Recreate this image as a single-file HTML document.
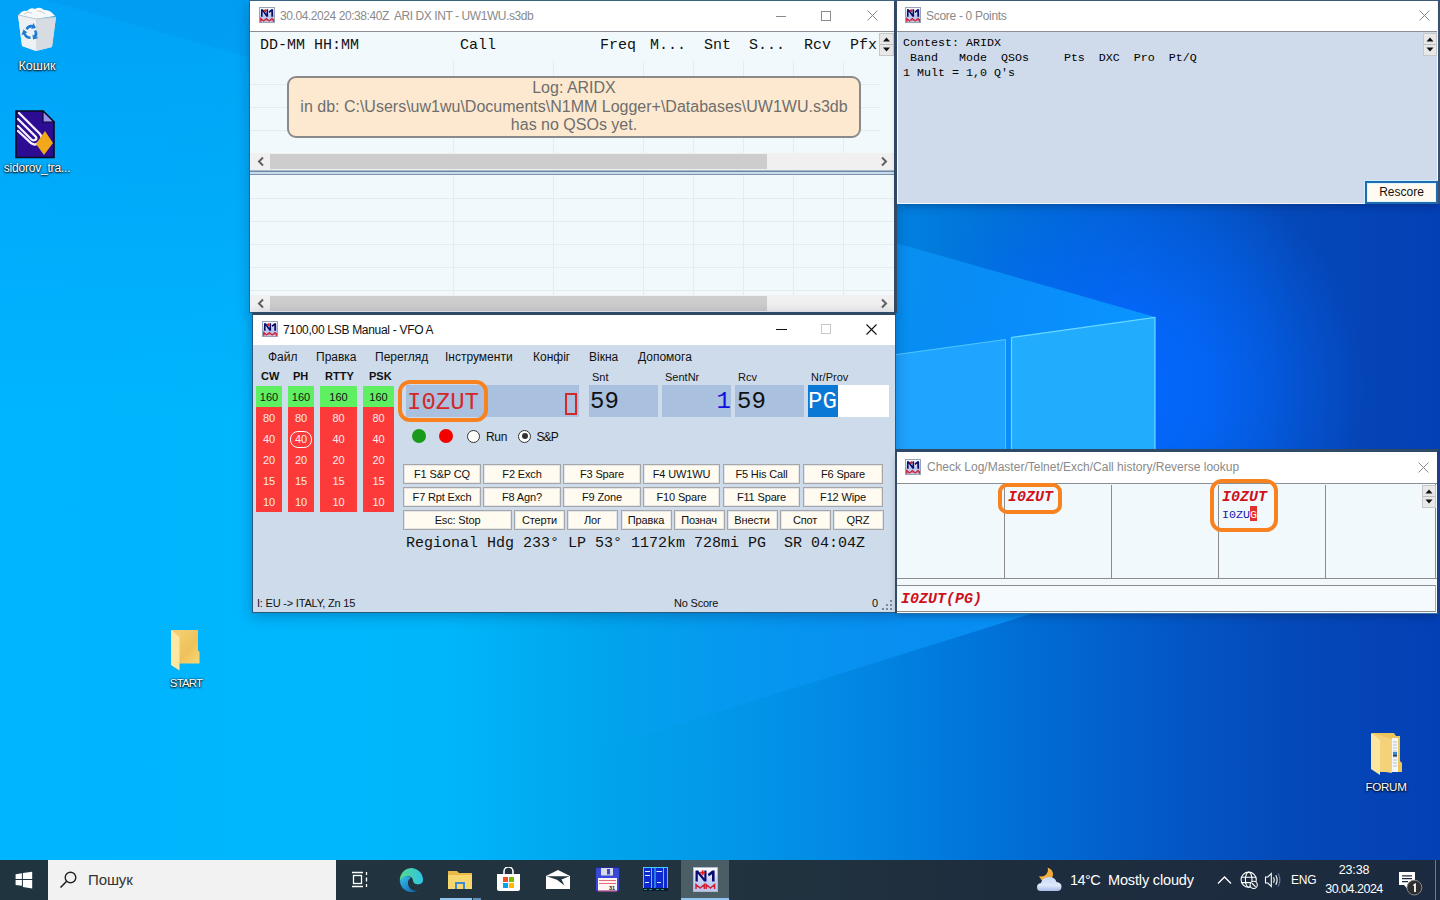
<!DOCTYPE html>
<html><head><meta charset="utf-8">
<style>
*{box-sizing:border-box;margin:0;padding:0}
html,body{width:1440px;height:900px;overflow:hidden;position:relative;font-family:"Liberation Sans",sans-serif}
.a{position:absolute}
.mono{font-family:"Liberation Mono",monospace}
.win{position:absolute;background:#fff;overflow:hidden;box-shadow:0 3px 12px rgba(0,20,60,0.28)}
.tt{position:absolute;font-size:12px;white-space:nowrap}
.lbl{position:absolute;white-space:nowrap}
.btn{position:absolute;height:20px;background:#fffbf0;border:1px solid #a6a6a6;box-shadow:inset 0 0 0 1px #e6e6e6;font-size:11px;color:#111;text-align:center;line-height:18px;white-space:nowrap;letter-spacing:-0.15px}
.dlbl{position:absolute;text-align:center;font-size:12px;color:#fff;text-shadow:0 0 2px #000,0 1px 2px #000;white-space:nowrap;letter-spacing:-0.2px}
</style></head><body>
<!-- WALLPAPER -->
<svg class="a" style="left:0;top:0" width="1440" height="900" viewBox="0 0 1440 900">
<defs>
<linearGradient id="bg" x1="0" y1="0" x2="1440" y2="0" gradientUnits="userSpaceOnUse">
<stop offset="0" stop-color="#00b5ff"/>
<stop offset="0.31" stop-color="#00b6fb"/>
<stop offset="0.42" stop-color="#00a4ec"/>
<stop offset="0.49" stop-color="#029aea"/>
<stop offset="0.59" stop-color="#0288e4"/>
<stop offset="0.69" stop-color="#0072d8"/>
<stop offset="0.80" stop-color="#035ac8"/>
<stop offset="0.90" stop-color="#0548b8"/>
<stop offset="1" stop-color="#0440b5"/>
</linearGradient>
</defs>
<rect width="1440" height="900" fill="url(#bg)"/>
<defs><linearGradient id="topdark" x1="0" y1="0" x2="0" y2="420" gradientUnits="userSpaceOnUse"><stop offset="0" stop-color="#0068e0" stop-opacity="0.24"/><stop offset="1" stop-color="#0068e0" stop-opacity="0"/></linearGradient></defs>
<rect x="0" y="0" width="897" height="420" fill="url(#topdark)"/>
<polygon points="0,0 0,-13 252,58 252,0" fill="#0070d0" opacity="0.1"/>
<defs><linearGradient id="beam" x1="560" y1="0" x2="1155" y2="0" gradientUnits="userSpaceOnUse">
<stop offset="0" stop-color="#10a0ff" stop-opacity="0"/>
<stop offset="1" stop-color="#0a98ff" stop-opacity="0.95"/></linearGradient>
<radialGradient id="glow" cx="1130" cy="390" r="235" gradientUnits="userSpaceOnUse">
<stop offset="0" stop-color="#0468ff" stop-opacity="1"/>
<stop offset="0.35" stop-color="#0468ff" stop-opacity="0.8"/>
<stop offset="1" stop-color="#0468ff" stop-opacity="0"/></radialGradient>
</defs>
<rect x="700" y="0" width="740" height="860" fill="url(#glow)"/>
<polygon points="0,-13 1155,317 1155,575 0,937" fill="url(#beam)"/>
<polygon points="600,395 1006,339 1006,560 600,560" fill="#1fa4ff"/>
<polygon points="1011,337 1155,317 1155,560 1011,560" fill="#21acfe"/>
<polyline points="600,395.5 1005.5,339.5 1005.5,560" fill="none" stroke="#50c4ff" stroke-width="1"/>
<polyline points="1011.5,560 1011.5,337.5 1155,317.5 1155,560" fill="none" stroke="#6ad8ff" stroke-width="1.2"/>
</svg>
<!-- N1MM icon symbol -->
<svg width="0" height="0" style="position:absolute">
<defs>
<linearGradient id="icg" x1="0" y1="0" x2="0" y2="1"><stop offset="0" stop-color="#ffffff"/><stop offset="0.55" stop-color="#b8c8f0"/><stop offset="1" stop-color="#c8d0f0"/></linearGradient>
<symbol id="n1" viewBox="0 0 16 16">
<rect x="0.5" y="0.5" width="15" height="15" fill="url(#icg)" stroke="#9aa2b8" stroke-width="1"/>
<path d="M2 9.8V2.2h1.9l3.6 4.9V2.2h1.6v7.6H7.4L3.6 4.6v5.2z" fill="#0c0c66"/>
<path d="M9.6 4.6l2.8-2.4h1.7v7.6h-1.8V4.6l-1.9 1.3z" fill="#0c0c66"/>
<path d="M5 3.6h2.6M6.3 2.3v2.6" stroke="#e41c1c" stroke-width="1.2"/>
<path d="M1.8 14.8V11.6L4.6 14 7.4 11.6 10.2 14 13 11.6 14.4 12.8V14.8" fill="none" stroke="#cc1828" stroke-width="1.3"/>
<path d="M2 13.6H14" stroke="#d04050" stroke-width="0.6"/>
</symbol>
</defs></svg>

<!-- WINDOW 1: LOG -->
<div class="win" style="left:249px;top:0;width:648px;height:313px;background:#f2f9fd;border:1px solid #3b6482;border-right:3px solid #354a63">
  <div class="a" style="left:0;top:0;width:646px;height:31px;background:#fff;border-bottom:1px solid #8a8f96"></div>
  <svg class="a" style="left:9px;top:6px" width="16" height="16"><use href="#n1"/></svg>
  <div class="tt" style="left:30px;top:8px;color:#8a8a8a;letter-spacing:-0.43px">30.04.2024 20:38:40Z&nbsp; ARI DX INT - UW1WU.s3db</div>
  <!-- caption buttons -->
  <div class="a" style="left:526px;top:15px;width:10px;height:1px;background:#8a8a8a"></div>
  <div class="a" style="left:571px;top:10px;width:10px;height:10px;border:1px solid #8a8a8a"></div>
  <svg class="a" style="left:617px;top:9px" width="11" height="11"><path d="M0.5 0.5L10.5 10.5M10.5 0.5L0.5 10.5" stroke="#8a8a8a" stroke-width="1"/></svg>
  <!-- grid upper -->
  <svg class="a" style="left:0;top:31px" width="646" height="122">
    <g stroke="#e4ecf0" stroke-width="1">
      <path d="M0 52.5H630M0 75.5H630M0 98.5H630M0 121.5H630"/>
      <path d="M203.5 29V122M303.5 29V122M393.5 29V122M443.5 29V122M493.5 29V122M543.5 29V122M593.5 29V122"/>
    </g>
  </svg>
  <div class="a mono" style="left:10px;top:36px;font-size:15px;color:#111;white-space:pre">DD-MM HH:MM</div>
  <div class="a mono" style="left:210px;top:36px;font-size:15px;color:#111">Call</div>
  <div class="a mono" style="left:350px;top:36px;font-size:15px;color:#111">Freq</div>
  <div class="a mono" style="left:400px;top:36px;font-size:15px;color:#111">M...</div>
  <div class="a mono" style="left:454px;top:36px;font-size:15px;color:#111">Snt</div>
  <div class="a mono" style="left:499px;top:36px;font-size:15px;color:#111">S...</div>
  <div class="a mono" style="left:554px;top:36px;font-size:15px;color:#111">Rcv</div>
  <div class="a mono" style="left:600px;top:36px;font-size:15px;color:#111">Pfx</div>
  <!-- spinner -->
  <div class="a" style="left:629px;top:32px;width:15px;height:23px;background:#e8e8e8;border:1px solid #c8c8c8"></div>
  <svg class="a" style="left:630px;top:33px" width="13" height="21"><path d="M3 7.5h7L6.5 3.5z" fill="#111"/><path d="M3 13.5h7L6.5 17.5z" fill="#111"/><path d="M0 10.5H13" stroke="#bdbdbd"/></svg>
  <!-- balloon -->
  <div class="a" style="left:37px;top:75px;width:574px;height:62px;background:#fde9cf;border:2px solid #8a8a8a;border-radius:9px"></div>
  <div class="a" style="left:37px;top:78px;width:574px;text-align:center;font-size:16px;line-height:18.5px;color:#6e6e6e">Log: ARIDX<br>in db: C:\Users\uw1wu\Documents\N1MM Logger+\Databases\UW1WU.s3db<br>has no QSOs yet.</div>
  <!-- scrollbar 1 -->
  <div class="a" style="left:0;top:152px;width:646px;height:17px;background:#f0f0f0"></div>
  <div class="a" style="left:20px;top:153px;width:497px;height:15px;background:#cdcdcd"></div>
  <svg class="a" style="left:6px;top:155px" width="10" height="11"><path d="M7 1.5L3 5.5L7 9.5" fill="none" stroke="#606060" stroke-width="2"/></svg>
  <svg class="a" style="left:629px;top:155px" width="10" height="11"><path d="M3 1.5L7 5.5L3 9.5" fill="none" stroke="#606060" stroke-width="2"/></svg>
  <!-- splitter -->
  <div class="a" style="left:0;top:169px;width:646px;height:1px;background:#a8b8c8"></div>
  <div class="a" style="left:0;top:170px;width:646px;height:1px;background:#6f8aa5"></div>
  <div class="a" style="left:0;top:171px;width:646px;height:2px;background:#c8dcec"></div>
  <div class="a" style="left:0;top:173px;width:646px;height:1px;background:#7d93aa"></div>
  <!-- grid lower -->
  <svg class="a" style="left:0;top:174px" width="646" height="121">
    <g stroke="#e4ecf0" stroke-width="1">
      <path d="M0 23.5H646M0 46.5H646M0 69.5H646M0 92.5H646M0 115.5H646"/>
      <path d="M203.5 0V121M303.5 0V121M393.5 0V121M443.5 0V121M493.5 0V121M543.5 0V121M593.5 0V121"/>
    </g>
  </svg>
  <!-- scrollbar 2 -->
  <div class="a" style="left:0;top:294px;width:646px;height:17px;background:#f0f0f0"></div>
  <div class="a" style="left:20px;top:295px;width:497px;height:15px;background:#cdcdcd"></div>
  <svg class="a" style="left:6px;top:297px" width="10" height="11"><path d="M7 1.5L3 5.5L7 9.5" fill="none" stroke="#606060" stroke-width="2"/></svg>
  <svg class="a" style="left:629px;top:297px" width="10" height="11"><path d="M3 1.5L7 5.5L3 9.5" fill="none" stroke="#606060" stroke-width="2"/></svg>
</div>

<!-- WINDOW 2: SCORE -->
<div class="win" style="left:896px;top:0;width:544px;height:204px;background:#cfdcec;border-left:1px solid #354a63;border-top:1px solid #3b5a7a;border-right:2px solid #3a5070;box-shadow:0 5px 8px -3px rgba(0,20,60,0.35)">
  <div class="a" style="left:0;top:0;width:543px;height:31px;background:#fff;border-bottom:1px solid #8a8f96"></div>
  <svg class="a" style="left:8px;top:6px" width="16" height="16"><use href="#n1"/></svg>
  <div class="tt" style="left:29px;top:8px;color:#8a8a8a;letter-spacing:-0.3px">Score - 0 Points</div>
  <svg class="a" style="left:522px;top:9px" width="11" height="11"><path d="M0.5 0.5L10.5 10.5M10.5 0.5L0.5 10.5" stroke="#8a8a8a" stroke-width="1"/></svg>
  <div class="a" style="left:0;top:31px;width:541px;height:171px;background:#cfdbeb"></div>
  <div class="a" style="left:0;top:31px;width:1px;height:171px;background:#f4f8fc"></div>
  <div class="a mono" style="left:6px;top:35px;font-size:11.67px;line-height:15px;color:#000;white-space:pre">Contest: ARIDX
 Band   Mode  QSOs     Pts  DXC  Pro  Pt/Q
1 Mult = 1,0 Q's</div>
  <div class="a" style="left:526px;top:32px;width:14px;height:23px;background:#e8e8e8;border:1px solid #c8c8c8"></div>
  <svg class="a" style="left:527px;top:33px" width="12" height="21"><path d="M2.5 7.5h7L6 3.5z" fill="#111"/><path d="M2.5 13.5h7L6 17.5z" fill="#111"/><path d="M0 10.5H12" stroke="#bdbdbd"/></svg>
  <div class="a" style="left:0;top:202px;width:544px;height:2px;background:#f4f6f8"></div>
  <!-- rescore -->
  <div class="a" style="left:540px;top:0;width:1px;height:204px;background:#f4f8fc"></div>
  <div class="a" style="left:468px;top:180px;width:73px;height:23px;border:2px solid #1f6bb2;background:#fffbf0;box-shadow:0 0 0 1px #c8ecff,inset 0 0 0 1px #dff6ff"></div>
  <div class="a" style="left:468px;top:184px;width:73px;text-align:center;font-size:12px;color:#111">Rescore</div>
</div>

<!-- WINDOW 3: ENTRY -->
<div class="win" style="left:252px;top:312px;width:644px;height:301px;background:#cedbeb;border:1px solid #2a5a80;border-top:3px solid #2f4a66">
  <div class="a" style="left:0;top:0;width:644px;height:30px;background:#fff"></div>
  <svg class="a" style="left:9px;top:6px" width="16" height="16"><use href="#n1"/></svg>
  <div class="tt" style="left:30px;top:8px;color:#111;letter-spacing:-0.3px">7100,00 LSB Manual - VFO A</div>
  <div class="a" style="left:523px;top:14px;width:11px;height:1px;background:#111"></div>
  <div class="a" style="left:568px;top:9px;width:10px;height:10px;border:1px solid #c8c8c8"></div>
  <svg class="a" style="left:613px;top:9px" width="11" height="11"><path d="M0.5 0.5L10.5 10.5M10.5 0.5L0.5 10.5" stroke="#111" stroke-width="1.1"/></svg>
  <!-- menu -->
  <div class="a" style="left:15px;top:35px;font-size:12px;color:#111;white-space:nowrap;word-spacing:0">
    <span class="a" style="left:0">Файл</span><span class="a" style="left:48px">Правка</span><span class="a" style="left:107px">Перегляд</span><span class="a" style="left:177px">Інструменти</span><span class="a" style="left:265px">Конфіг</span><span class="a" style="left:321px">Вікна</span><span class="a" style="left:370px">Допомога</span>
  </div>
  <!-- band labels -->
  <div class="a" style="left:0;top:54.5px;font-size:11px;font-weight:bold;color:#111;white-space:nowrap">
    <span class="a" style="left:8px">CW</span><span class="a" style="left:40px">PH</span><span class="a" style="left:72px">RTTY</span><span class="a" style="left:116px">PSK</span>
  </div>
  <!-- band columns -->
  <div class="a" style="left:3px;top:71px;width:26px;height:21px;background:#5ff062"></div>
<div class="a" style="left:3px;top:76px;width:26px;text-align:center;font-size:11px;color:#111">160</div>
<div class="a" style="left:3px;top:92px;width:26px;height:21px;background:#fd3a3a"></div>
<div class="a" style="left:3px;top:97px;width:26px;text-align:center;font-size:11px;color:#ffecec">80</div>
<div class="a" style="left:3px;top:113px;width:26px;height:21px;background:#fd3a3a"></div>
<div class="a" style="left:3px;top:118px;width:26px;text-align:center;font-size:11px;color:#ffecec">40</div>
<div class="a" style="left:3px;top:134px;width:26px;height:21px;background:#fd3a3a"></div>
<div class="a" style="left:3px;top:139px;width:26px;text-align:center;font-size:11px;color:#ffecec">20</div>
<div class="a" style="left:3px;top:155px;width:26px;height:21px;background:#fd3a3a"></div>
<div class="a" style="left:3px;top:160px;width:26px;text-align:center;font-size:11px;color:#ffecec">15</div>
<div class="a" style="left:3px;top:176px;width:26px;height:21px;background:#fd3a3a"></div>
<div class="a" style="left:3px;top:181px;width:26px;text-align:center;font-size:11px;color:#ffecec">10</div>
<div class="a" style="left:35px;top:71px;width:26px;height:21px;background:#5ff062"></div>
<div class="a" style="left:35px;top:76px;width:26px;text-align:center;font-size:11px;color:#111">160</div>
<div class="a" style="left:35px;top:92px;width:26px;height:21px;background:#fd3a3a"></div>
<div class="a" style="left:35px;top:97px;width:26px;text-align:center;font-size:11px;color:#ffecec">80</div>
<div class="a" style="left:35px;top:113px;width:26px;height:21px;background:#fd3a3a"></div>
<div class="a" style="left:35px;top:118px;width:26px;text-align:center;font-size:11px;color:#ffecec">40</div>
<div class="a" style="left:35px;top:134px;width:26px;height:21px;background:#fd3a3a"></div>
<div class="a" style="left:35px;top:139px;width:26px;text-align:center;font-size:11px;color:#ffecec">20</div>
<div class="a" style="left:35px;top:155px;width:26px;height:21px;background:#fd3a3a"></div>
<div class="a" style="left:35px;top:160px;width:26px;text-align:center;font-size:11px;color:#ffecec">15</div>
<div class="a" style="left:35px;top:176px;width:26px;height:21px;background:#fd3a3a"></div>
<div class="a" style="left:35px;top:181px;width:26px;text-align:center;font-size:11px;color:#ffecec">10</div>
<div class="a" style="left:67px;top:71px;width:37px;height:21px;background:#5ff062"></div>
<div class="a" style="left:67px;top:76px;width:37px;text-align:center;font-size:11px;color:#111">160</div>
<div class="a" style="left:67px;top:92px;width:37px;height:21px;background:#fd3a3a"></div>
<div class="a" style="left:67px;top:97px;width:37px;text-align:center;font-size:11px;color:#ffecec">80</div>
<div class="a" style="left:67px;top:113px;width:37px;height:21px;background:#fd3a3a"></div>
<div class="a" style="left:67px;top:118px;width:37px;text-align:center;font-size:11px;color:#ffecec">40</div>
<div class="a" style="left:67px;top:134px;width:37px;height:21px;background:#fd3a3a"></div>
<div class="a" style="left:67px;top:139px;width:37px;text-align:center;font-size:11px;color:#ffecec">20</div>
<div class="a" style="left:67px;top:155px;width:37px;height:21px;background:#fd3a3a"></div>
<div class="a" style="left:67px;top:160px;width:37px;text-align:center;font-size:11px;color:#ffecec">15</div>
<div class="a" style="left:67px;top:176px;width:37px;height:21px;background:#fd3a3a"></div>
<div class="a" style="left:67px;top:181px;width:37px;text-align:center;font-size:11px;color:#ffecec">10</div>
<div class="a" style="left:110px;top:71px;width:31px;height:21px;background:#5ff062"></div>
<div class="a" style="left:110px;top:76px;width:31px;text-align:center;font-size:11px;color:#111">160</div>
<div class="a" style="left:110px;top:92px;width:31px;height:21px;background:#fd3a3a"></div>
<div class="a" style="left:110px;top:97px;width:31px;text-align:center;font-size:11px;color:#ffecec">80</div>
<div class="a" style="left:110px;top:113px;width:31px;height:21px;background:#fd3a3a"></div>
<div class="a" style="left:110px;top:118px;width:31px;text-align:center;font-size:11px;color:#ffecec">40</div>
<div class="a" style="left:110px;top:134px;width:31px;height:21px;background:#fd3a3a"></div>
<div class="a" style="left:110px;top:139px;width:31px;text-align:center;font-size:11px;color:#ffecec">20</div>
<div class="a" style="left:110px;top:155px;width:31px;height:21px;background:#fd3a3a"></div>
<div class="a" style="left:110px;top:160px;width:31px;text-align:center;font-size:11px;color:#ffecec">15</div>
<div class="a" style="left:110px;top:176px;width:31px;height:21px;background:#fd3a3a"></div>
<div class="a" style="left:110px;top:181px;width:31px;text-align:center;font-size:11px;color:#ffecec">10</div>
<div class="a" style="left:36.5px;top:115.8px;width:22.5px;height:17px;border:1px solid #fff;border-radius:8px"></div>
  <!-- call field -->
  <div class="a" style="left:153px;top:70px;width:173px;height:32px;background:#a9c0df"></div>
  <div class="a mono" style="left:154px;top:74px;font-size:24px;color:#d42828">I0ZUT</div>
  <div class="a" style="left:312px;top:78px;width:12px;height:22px;border:2px solid #d42828"></div>
  <div class="a" style="left:145px;top:65px;width:90px;height:42px;border:4.5px solid #f7821f;border-radius:12px"></div>
  <!-- indicators -->
  <div class="a" style="left:159px;top:114px;width:14px;height:14px;border-radius:50%;background:#1a9a1a"></div>
  <div class="a" style="left:186px;top:114px;width:14px;height:14px;border-radius:50%;background:#f40000"></div>
  <div class="a" style="left:213.5px;top:114.5px;width:13px;height:13px;border-radius:50%;background:#fff;border:1px solid #333"></div>
  <div class="a" style="left:233px;top:115px;font-size:12px;color:#111;letter-spacing:-0.3px">Run</div>
  <div class="a" style="left:265px;top:114.5px;width:13px;height:13px;border-radius:50%;background:#fff;border:1px solid #333"></div>
  <div class="a" style="left:268.5px;top:118px;width:6px;height:6px;border-radius:50%;background:#333"></div>
  <div class="a" style="left:283.5px;top:115px;font-size:12px;color:#111;letter-spacing:-0.9px">S&amp;P</div>
  <!-- exchange labels -->
  <div class="a" style="left:339px;top:56px;font-size:11px;color:#111">Snt</div>
  <div class="a" style="left:412px;top:56px;font-size:11px;color:#111">SentNr</div>
  <div class="a" style="left:485px;top:56px;font-size:11px;color:#111">Rcv</div>
  <div class="a" style="left:558px;top:56px;font-size:11px;color:#111">Nr/Prov</div>
  <div class="a" style="left:336px;top:70px;width:69px;height:32px;background:#a9c0df"></div>
  <div class="a" style="left:409px;top:70px;width:69px;height:32px;background:#a9c0df"></div>
  <div class="a" style="left:482px;top:70px;width:69px;height:32px;background:#a9c0df"></div>
  <div class="a" style="left:555px;top:70px;width:81px;height:32px;background:#fff"></div>
  <div class="a" style="left:555px;top:70px;width:30px;height:32px;background:#0a78d4"></div>
  <div class="a mono" style="left:337px;top:73px;font-size:24px;color:#111">59</div>
  <div class="a mono" style="left:409px;top:73px;width:69px;text-align:right;font-size:24px;color:#1010e0">1</div>
  <div class="a mono" style="left:484px;top:73px;font-size:24px;color:#111">59</div>
  <div class="a mono" style="left:555px;top:73px;font-size:24px;color:#fff">PG</div>
  <!-- buttons -->
  <div class="btn" style="left:150px;top:149px;width:78px">F1 S&amp;P CQ</div>
  <div class="btn" style="left:230px;top:149px;width:78px">F2 Exch</div>
  <div class="btn" style="left:310px;top:149px;width:78px">F3 Spare</div>
  <div class="btn" style="left:390px;top:149px;width:77px">F4 UW1WU</div>
  <div class="btn" style="left:470px;top:149px;width:77px">F5 His Call</div>
  <div class="btn" style="left:550px;top:149px;width:80px">F6 Spare</div>
  <div class="btn" style="left:150px;top:172px;width:78px">F7 Rpt Exch</div>
  <div class="btn" style="left:230px;top:172px;width:78px">F8 Agn?</div>
  <div class="btn" style="left:310px;top:172px;width:78px">F9 Zone</div>
  <div class="btn" style="left:390px;top:172px;width:77px">F10 Spare</div>
  <div class="btn" style="left:470px;top:172px;width:77px">F11 Spare</div>
  <div class="btn" style="left:550px;top:172px;width:80px">F12 Wipe</div>
  <div class="btn" style="left:150px;top:195px;width:109px">Esc: Stop</div>
  <div class="btn" style="left:261px;top:195px;width:51px">Стерти</div>
  <div class="btn" style="left:314px;top:195px;width:51px">Лог</div>
  <div class="btn" style="left:367.5px;top:195px;width:51px">Правка</div>
  <div class="btn" style="left:420.5px;top:195px;width:51px">Познач</div>
  <div class="btn" style="left:473.5px;top:195px;width:51px">Внести</div>
  <div class="btn" style="left:526.5px;top:195px;width:51px">Спот</div>
  <div class="btn" style="left:579.5px;top:195px;width:51px">QRZ</div>
  <div class="a mono" style="left:153px;top:220px;font-size:15px;color:#111;white-space:pre">Regional Hdg 233° LP 53° 1172km 728mi PG  SR 04:04Z</div>
  <!-- status -->
  <div class="a" style="left:4px;top:282px;font-size:11px;color:#111;letter-spacing:-0.2px">I: EU -&gt; ITALY, Zn 15</div>
  <div class="a" style="left:421px;top:282px;font-size:11px;color:#111;letter-spacing:-0.2px">No Score</div>
  <div class="a" style="left:619px;top:282px;font-size:11px;color:#111">0</div>
  <svg class="a" style="left:628px;top:284px" width="14" height="14"><g fill="#7d8a9c"><rect x="9" y="1" width="2" height="2"/><rect x="5" y="5" width="2" height="2"/><rect x="9" y="5" width="2" height="2"/><rect x="1" y="9" width="2" height="2"/><rect x="5" y="9" width="2" height="2"/><rect x="9" y="9" width="2" height="2"/></g></svg>

</div>

<!-- WINDOW 4: CHECK -->
<div class="win" style="box-shadow:0 5px 8px -3px rgba(0,20,60,0.35);left:895px;top:449px;width:545px;height:165px;background:#f2f9fd;border-left:2px solid #354a63;border-top:3px solid #2f4a66;border-bottom:1px solid #3070a8;border-right:3px solid #1c3c88">
  <div class="a" style="left:0;top:0;width:543px;height:32px;background:#fff;border-bottom:1px solid #8a8f96"></div>
  <svg class="a" style="left:8px;top:7px" width="16" height="16"><use href="#n1"/></svg>
  <div class="tt" style="left:30px;top:8px;color:#8a8a8a;letter-spacing:0px">Check Log/Master/Telnet/Exch/Call history/Reverse lookup</div>
  <svg class="a" style="left:521px;top:10px" width="11" height="11"><path d="M0.5 0.5L10.5 10.5M10.5 0.5L0.5 10.5" stroke="#8a8a8a" stroke-width="1"/></svg>
  <!-- grid -->
  <div class="a" style="left:0;top:32px;width:543px;height:95px;background:#f2f9fd"></div>
  <svg class="a" style="left:0;top:31px" width="543" height="100">
    <g stroke="#8c8c8c" stroke-width="1">
      <path d="M107.5 2V95M214.5 2V95M321.5 2V95M428.5 2V95M538.5 1V95"/>
      <path d="M0 95.5H543"/>
    </g>
  </svg>
  <div class="a" style="left:525px;top:33px;width:14px;height:23px;background:#e8e8e8;border:1px solid #c8c8c8"></div>
  <svg class="a" style="left:526px;top:34px" width="12" height="21"><path d="M2.5 7.5h7L6 3.5z" fill="#111"/><path d="M2.5 13.5h7L6 17.5z" fill="#111"/><path d="M0 10.5H12" stroke="#bdbdbd"/></svg>
  <div class="a mono" style="left:111px;top:37px;font-size:15px;font-weight:bold;font-style:italic;color:#d0101a">I0ZUT</div>
  <div class="a mono" style="left:325px;top:37px;font-size:15px;font-weight:bold;font-style:italic;color:#d0101a">I0ZUT</div>
  <div class="a" style="left:353px;top:54px;width:7px;height:15px;background:#e03030"></div>
  <div class="a mono" style="left:325px;top:56px;font-size:11.67px;color:#1818b0">I0ZU<span style="color:#fff">G</span></div>
  <div class="a" style="left:101px;top:31px;width:64px;height:31px;border:4px solid #f7821f;border-radius:9px"></div>
  <div class="a" style="left:313px;top:27px;width:68px;height:53px;border:4px solid #f7821f;border-radius:12px"></div>
  <!-- input -->
  <div class="a" style="left:0;top:133px;width:539px;height:27px;background:#f4fafd;border-top:1px solid #8c8c8c;border-bottom:1px solid #8c8c8c;border-right:1px solid #a8a8a8"></div>
  <div class="a mono" style="left:4px;top:139px;font-size:15px;font-weight:bold;font-style:italic;color:#d0101a">I0ZUT(PG)</div>
</div>

<!-- DESKTOP ICONS -->
<svg class="a" style="left:10px;top:4px" width="54" height="52" viewBox="0 0 54 52">
  <path d="M8 11 L26 15 L46 13 L42 43 L26 47 L12 42 Z" fill="#dfe4e8"/>
  <path d="M8 11 L26 15 L26 47 L12 42 Z" fill="#eef1f3"/>
  <path d="M26 15 L46 13 L42 43 L26 47 Z" fill="#d6dce1"/>
  <path d="M9 11 Q12 6 17 7 Q20 3 25 5 Q30 2 34 6 Q40 5 45 12 L26 15 Z" fill="#f6f8f9"/>
  <path d="M14 10 Q18 7 22 9 M27 7 Q31 6 35 10" fill="none" stroke="#c8d0d6" stroke-width="1"/>
  <path d="M8 11 L26 15 L46 13" fill="none" stroke="#b8c4cc" stroke-width="0.8"/>
  <g fill="#1f7bd2">
    <path d="M15.5 24.5 Q18 20 22.5 21 L23.5 19 L26 24 L21 25 L22 23.5 Q19 23 17.5 26 Z"/>
    <path d="M26 26 Q28.5 29.5 26.5 33 L28.5 34 L23 35.5 L22.5 30.5 L24 31.5 Q25.5 29 24 27 Z"/>
    <path d="M20.5 35 Q15.5 35 13.5 30.5 L11.5 31 L13.5 25.5 L17.5 28.5 L15.5 29 Q17 32.5 20.5 32.5 Z"/>
  </g>
</svg>
<div class="dlbl" style="left:0px;top:59px;width:74px;font-size:12.6px;letter-spacing:0">Кошик</div>
<svg class="a" style="left:15px;top:110px" width="41" height="49" viewBox="0 0 41 49">
  <path d="M1 1 H28 L39 12 V47.5 H1 Z" fill="#2c0c92" stroke="#0a0a20" stroke-width="1.6"/>
  <path d="M28 1 V12 H39 Z" fill="#9a94f0" stroke="#0a0a20" stroke-width="1.2"/>
  <g fill="none" stroke="#f4eeff" stroke-width="2.3" stroke-linecap="round">
    <path d="M4 3 L25 24 Q28 28 25 31 L23 33 Q20 36 16 33 L3 21"/>
    <path d="M3 9 L21 27 Q22 29 20 30 Q18 31 16 29 L3 16"/>
  </g>
  <path d="M30 21 L38 33 L29 45 L21 34 Z" fill="#f2a818"/>
</svg>
<div class="dlbl" style="left:0px;top:161px;width:74px">sidorov_tra...</div>
<svg class="a" style="left:169px;top:628px" width="33" height="44" viewBox="0 0 33 44">
  <defs><linearGradient id="fldB" x1="0" y1="0" x2="1" y2="1"><stop offset="0" stop-color="#f6d27a"/><stop offset="0.6" stop-color="#eec25a"/><stop offset="1" stop-color="#f8d878"/></linearGradient></defs>
  <path d="M2.5 2 H29 V22 L30.5 24 V35.5 H10 Z" fill="url(#fldB)"/>
  <path d="M2 2 L10.5 9 V42.5 L2 37 Z" fill="#fde7a2"/>
</svg>
<div class="dlbl" style="left:146px;top:677px;width:80px;font-size:11.4px;letter-spacing:-0.8px">START</div>
<svg class="a" style="left:1369px;top:730px" width="36" height="46" viewBox="0 0 36 46">
  <path d="M3 3 H25 L27 6 H31 V31 L33 33 V42 H10 Z" fill="#eec45c"/>
  <path d="M23 8 H29 V42 H23 Z" fill="#f4f6f8"/>
  <g stroke="#9ab0c0" stroke-width="0.7"><path d="M24 12H28M24 15H28M24 18H28M24 21H28M24 27H28M24 30H28M24 33H28M24 36H28"/></g>
  <rect x="24" y="22" width="4" height="3" fill="#3a8ad0"/><rect x="24" y="25" width="4" height="1.5" fill="#223a50"/>
  <path d="M3 3 L23 9 V43 L10 41 Z" fill="#f4d27a"/>
  <path d="M2 3 L11 10 V45 L2 39 Z" fill="#fde6a0"/>
</svg>
<div class="dlbl" style="left:1346px;top:780px;width:80px;font-size:11.6px;letter-spacing:-0.3px">FORUM</div>

<!-- TASKBAR -->
<div class="a" style="left:0;top:860px;width:1440px;height:40px;background:linear-gradient(90deg,#20343f 0%,#21333f 50%,#1e2d3e 70%,#1c2a3f 100%)"></div>
<svg class="a" style="left:15px;top:871px" width="18" height="18" viewBox="0 0 18 18"><g fill="#fff"><path d="M0.6 3.2 L6.9 2.3 V8 H0.6Z"/><path d="M7.9 2.1 L17.2 0.7 V8 H7.9Z"/><path d="M0.6 9 H6.9 V14.8 L0.6 14Z"/><path d="M7.9 9 H17.2 V17.4 L7.9 16Z"/></g></svg>
<div class="a" style="left:48px;top:860px;width:288px;height:40px;background:#f2f2f2"></div>
<svg class="a" style="left:59px;top:871px" width="19" height="18" viewBox="0 0 19 18"><circle cx="11.5" cy="6.5" r="5.3" fill="none" stroke="#222" stroke-width="1.4"/><path d="M7.7 10.3 L1.5 16.5" stroke="#222" stroke-width="1.6"/></svg>
<div class="a" style="left:88px;top:871px;font-size:15px;color:#333;letter-spacing:-0.1px">Пошук</div>
<!-- task view -->
<svg class="a" style="left:351px;top:871px" width="18" height="17" viewBox="0 0 18 17"><g fill="none" stroke="#fff" stroke-width="1.3"><path d="M1 1.5 H12 M1 15.5 H12"/><rect x="2.5" y="4.5" width="8" height="8"/><path d="M15.5 1 V4 M15.5 6.5 V10.5 M15.5 13 V16"/></g></svg>
<!-- edge -->
<svg class="a" style="left:398px;top:867px" width="26" height="26" viewBox="0 0 26 26">
  <defs><linearGradient id="edg1" x1="0" y1="0" x2="1" y2="1"><stop offset="0" stop-color="#35c1f1"/><stop offset="1" stop-color="#0c59a4"/></linearGradient>
  <linearGradient id="edg2" x1="0" y1="0" x2="1" y2="0"><stop offset="0" stop-color="#55d98a"/><stop offset="1" stop-color="#2ec4e8"/></linearGradient></defs>
  <path d="M13 1 A12 12 0 0 1 25 13 C25 17 21 18 18 17 C14 16 16 12 13 10 C9 8 3 11 2 15 A12 12 0 0 1 13 1Z" fill="url(#edg2)"/>
  <path d="M2 15 C3 9 10 8 13 11 C10 12 9 16 11 20 C13 24 19 25 22 22 A12 12 0 0 1 2 15Z" fill="url(#edg1)"/>
</svg>
<!-- explorer -->
<svg class="a" style="left:447px;top:870px" width="26" height="20" viewBox="0 0 26 20"><path d="M1 1 H10 L12 3 H25 V19 H1Z" fill="#e9b949"/><path d="M1 5 H25 V19 H1Z" fill="#f7d66e"/><path d="M8 12 H18 V19 H16 V14 H10 V19 H8Z" fill="#3a8ad8"/></svg>
<div class="a" style="left:440px;top:898px;width:32px;height:2px;background:#8ec4ee"></div>
<div class="a" style="left:473px;top:898px;width:8px;height:2px;background:#5d8fb8"></div>
<!-- store -->
<svg class="a" style="left:496px;top:867px" width="25" height="25" viewBox="0 0 25 25"><path d="M8 7 V4.5 A4.5 4.5 0 0 1 17 4.5 V7" fill="none" stroke="#fff" stroke-width="1.6"/><path d="M1 7 H24 V22 Q24 24 22 24 H3 Q1 24 1 22Z" fill="#fff"/><rect x="7" y="10" width="5" height="5" fill="#f25022"/><rect x="13" y="10" width="5" height="5" fill="#7fba00"/><rect x="7" y="16" width="5" height="5" fill="#00a4ef"/><rect x="13" y="16" width="5" height="5" fill="#ffb900"/></svg>
<!-- mail -->
<svg class="a" style="left:545px;top:869px" width="26" height="21" viewBox="0 0 26 21"><path d="M1 7 L13 1 L25 7 V20 H1Z" fill="#fff"/><path d="M1.5 7.2 H24.5 L16.5 10.5 L19.5 16.5 L12 10.8 Z" fill="#21333f"/></svg>
<!-- floppy -->
<svg class="a" style="left:595px;top:867px" width="25" height="25" viewBox="0 0 25 25"><rect x="0.5" y="0.5" width="24" height="24" rx="2" fill="#3a48d8" stroke="#1a2890"/><rect x="6" y="1" width="12" height="7.5" fill="#d8dcea"/><rect x="12" y="2" width="3" height="5.5" fill="#3a48c8"/><rect x="3" y="11" width="19" height="12.5" fill="#fff4f4"/><g stroke="#e86a78" stroke-width="1"><path d="M4 13.5H21M4 16.5H21"/></g><text x="20" y="22.6" font-size="5.5" font-family="Liberation Sans" font-weight="bold" fill="#222" text-anchor="end">31</text><rect x="3" y="23.5" width="19" height="1" fill="#e86a78"/></svg>
<!-- blue app -->
<svg class="a" style="left:643px;top:867px" width="25" height="24" viewBox="0 0 25 24"><rect x="0" y="0" width="25" height="21" fill="#0c2ad0"/><g stroke="#40d0ff" stroke-width="1"><path d="M0.5 0V21M12 0V21M24.5 0V21M8.5 0V21M20.5 0V21M0 0.5H25"/></g><g stroke="#d8f0ff" stroke-width="1"><path d="M2 4.5H7M2 8.5H7M13.5 4.5H19M2 15.5H6M14 15.5H18"/></g><rect x="0" y="21" width="25" height="3" fill="#0a1a30"/><g fill="#20a070"><rect x="1" y="22" width="3" height="1"/><rect x="6" y="22" width="3" height="1"/><rect x="13" y="22" width="3" height="1"/><rect x="18" y="22" width="3" height="1"/></g></svg>
<!-- n1mm active -->
<div class="a" style="left:681px;top:860px;width:48px;height:40px;background:#4b5e66"></div>
<svg class="a" style="left:693px;top:867px" width="25" height="25" viewBox="0 0 25 25">
<defs><linearGradient id="n1big" x1="0" y1="0" x2="0" y2="1"><stop offset="0" stop-color="#ffffff"/><stop offset="0.6" stop-color="#c4d0f4"/><stop offset="1" stop-color="#b8c4ec"/></linearGradient></defs>
<rect x="0.5" y="0.5" width="24" height="24" fill="url(#n1big)" stroke="#b0b8d0"/>
<path d="M2.5 14.5V3.5h2.6l6.2 7.8V3.5h2.2v11h-2.4L4.8 6.8v7.7z" fill="#0c0c70"/>
<path d="M14.8 7l4.4-3.5h2.4v11h-2.6V7.2l-3.2 2z" fill="#0c0c70"/>
<path d="M7.2 5.6h5M9.7 3.2v5" stroke="#e01818" stroke-width="1.6"/>
<path d="M3 22V17.5l4.2 3.5 4.2-3.5V22M13.2 22V17.5l4.2 3.5 4.2-3.5V22" fill="none" stroke="#d42030" stroke-width="1.5"/>
</svg>
<div class="a" style="left:681px;top:898px;width:48px;height:2px;background:#8ec4ee"></div>
<!-- tray -->
<svg class="a" style="left:1036px;top:866px" width="28" height="26" viewBox="0 0 28 26">
<defs><linearGradient id="cld" x1="0" y1="0" x2="0" y2="1"><stop offset="0" stop-color="#c8d8f8"/><stop offset="0.6" stop-color="#dde8fa"/><stop offset="1" stop-color="#a8bce8"/></linearGradient>
<linearGradient id="moon" x1="0" y1="0" x2="1" y2="1"><stop offset="0" stop-color="#f8c040"/><stop offset="1" stop-color="#f0a030"/></linearGradient></defs>
<mask id="mmask"><rect width="28" height="26" fill="#fff"/><circle cx="5.5" cy="4" r="6.5" fill="#000"/></mask><circle cx="10" cy="8.5" r="7" fill="url(#moon)" mask="url(#mmask)"/>
<path d="M4.5 25 Q1 25 1 21 Q1 17.5 5 17 Q6 11 13 11 Q19 11 20.5 16 Q25.5 16.5 25.5 20.5 Q25.5 25 21 25 Z" fill="url(#cld)"/>
</svg>
<div class="a" style="left:1070px;top:872px;font-size:14.5px;color:#fff;letter-spacing:-0.6px">14°C</div>
<div class="a" style="left:1108px;top:872px;font-size:14.5px;color:#fff;letter-spacing:-0.15px">Mostly cloudy</div>
<svg class="a" style="left:1217px;top:875px" width="15" height="10" viewBox="0 0 15 10"><path d="M1 8.5 L7.5 2 L14 8.5" fill="none" stroke="#fff" stroke-width="1.3"/></svg>
<svg class="a" style="left:1240px;top:871px" width="19" height="19" viewBox="0 0 19 19"><g fill="none" stroke="#fff" stroke-width="1.1"><circle cx="8.7" cy="8.7" r="7.6"/><ellipse cx="8.7" cy="8.7" rx="3.3" ry="7.6"/><path d="M1.3 6.3H16.1M1.3 11.6H11"/></g><circle cx="13.7" cy="13.9" r="3.6" fill="#1e2d3e" stroke="#fff" stroke-width="1.1"/><path d="M11.8 12 L15.6 15.8" stroke="#fff" stroke-width="1.1"/></svg>
<svg class="a" style="left:1264px;top:872px" width="18" height="16" viewBox="0 0 18 16"><path d="M1.5 5 H3.8 L7.3 1.6 V14.4 L3.8 11 H1.5 Z" fill="none" stroke="#fff" stroke-width="1.1"/><path d="M9.6 5.2 Q11 8 9.6 10.8M11.8 3.2 Q14.4 8 11.8 12.8" fill="none" stroke="#fff" stroke-width="1.1"/><path d="M14.2 1.4 Q17.6 8 14.2 14.6" fill="none" stroke="#7888a8" stroke-width="1"/></svg>
<div class="a" style="left:1291px;top:873px;font-size:12px;color:#fff;letter-spacing:-0.2px">ENG</div>
<div class="a" style="left:1327px;top:863px;width:54px;text-align:center;font-size:12.5px;color:#fff;letter-spacing:-0.2px">23:38</div>
<div class="a" style="left:1322px;top:882px;width:64px;text-align:center;font-size:12.5px;color:#fff;letter-spacing:-0.5px">30.04.2024</div>
<svg class="a" style="left:1396px;top:869px" width="30" height="28" viewBox="0 0 30 28"><path d="M3 3 H19 V16 H12.5 L11 19.5 L8 16 H3 Z" fill="#fff"/><path d="M6 6.8 H16 M6 9.7 H16 M6 12.6 H12" stroke="#1e2d3e" stroke-width="1.2"/><circle cx="18.4" cy="18.6" r="7.4" fill="#2e2e2e" stroke="#888" stroke-width="1"/><path d="M17.6 15.2 L19.9 13.9 V23 H18.1 V16.4 L16.9 17 Z" fill="#fff"/></svg>
<div class="a" style="left:1435px;top:860px;width:1px;height:40px;background:#6a7896"></div>

</body></html>
